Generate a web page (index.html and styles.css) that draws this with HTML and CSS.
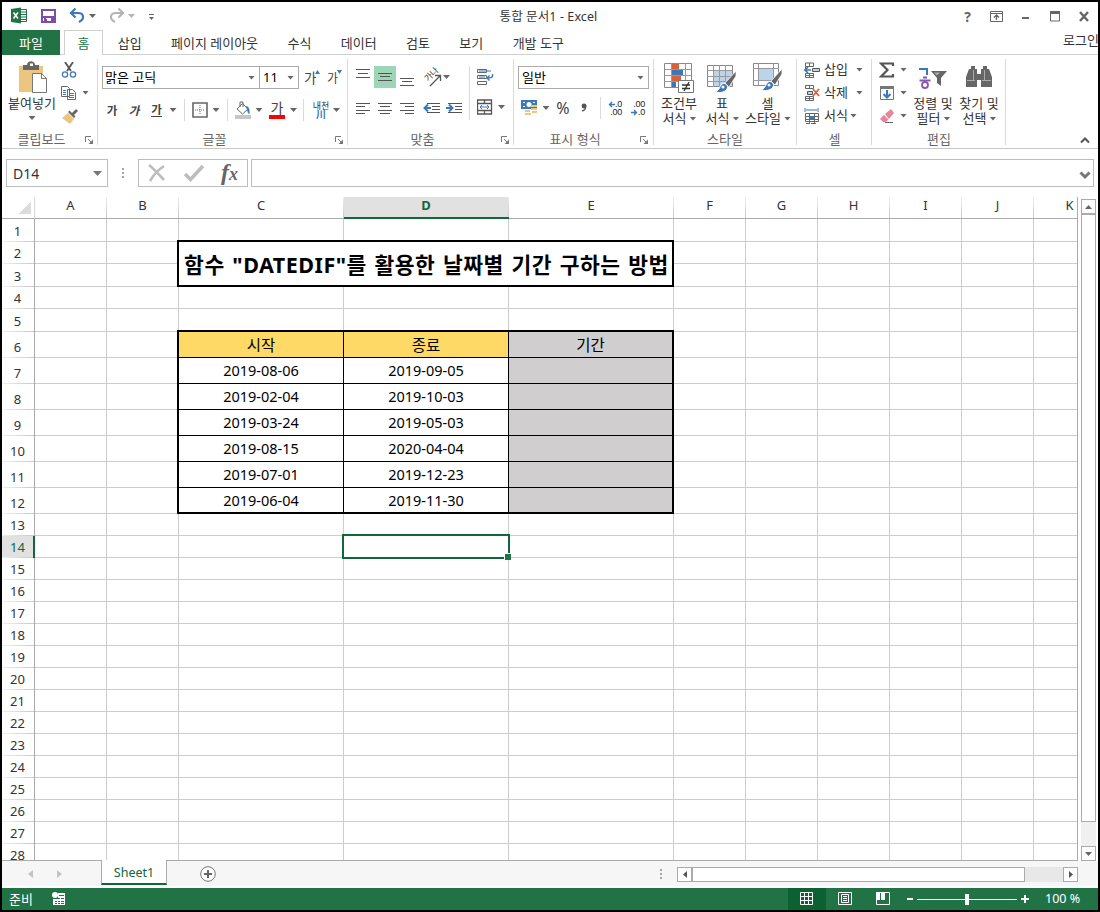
FILE: index.html
```html
<!DOCTYPE html>
<html lang="ko">
<head>
    <meta charset="UTF-8">
    <meta name="viewport" content="width=device-width, initial-scale=1.0">
    <title>통합 문서1 - Excel</title>
    <link rel="stylesheet" href="styles.css">
</head>
<body>
    <div class="window">
        <header class="titlebar">
            <div class="quick">
                <svg width="34" height="28"><path d="M18 7.500h6.500v12h-6.500" fill="#fff" stroke="#217346"/><path d="M19 10h5M19 12.500h5M19 15h5M19 17.500h5" stroke="#217346"/><path d="M9 7l10-1.500v16l-10-1.500z" fill="#217346"/><path d="M11.500 10.500l4.500 6M16 10.500l-4.500 6" stroke="#fff" stroke-width="1.600"/></svg>
                <svg width="28" height="28"><path d="M6 8h13v12h-13z" fill="#fff" stroke="#7e4ba6" stroke-width="2"/><path d="M6 14h13v2h-13zM8 16h2v4h-2zM15 16h3v4h-3z" fill="#7e4ba6"/><path d="M9 17h2v3h-2z" fill="#7e4ba6"/></svg>
                <svg width="26" height="28"><path d="M5 11h8c6 0 7 6 1 9" fill="none" stroke="#3b78b8" stroke-width="2.200"/><path d="M10.500 6.500L6 11l4.500 4.500" fill="none" stroke="#3b78b8" stroke-width="2.200"/></svg>
                <i class="arrow"></i>
                <svg class="redo" width="26" height="28"><path d="M21 11h-8c-6 0-7 6-1 9" fill="none" stroke="#b4b4b4" stroke-width="2.200"/><path d="M15.500 6.500L20 11l-4.500 4.500" fill="none" stroke="#b4b4b4" stroke-width="2.200"/></svg>
                <i class="arrow pale"></i>
                <svg width="30" height="28"><path d="M15 12.500h5" stroke="#666"/><path d="M15 15h5l-2.500 3z" fill="#666"/></svg>
            </div>
            <h1>통합 문서1 - Excel</h1>
            <div class="controls">
                <b>?</b>
                <svg width="29" height="28"><path d="M8.500 9.500h12v10h-12zM8.500 11.500h12" fill="none" stroke="#666"/><path d="M14.500 18v-5M12 15.500l2.500-2.500 2.500 2.500" fill="none" stroke="#666" stroke-width="1.300"/></svg>
                <svg width="29" height="28"><path d="M11 15h7v2h-7z" fill="#666"/></svg>
                <svg width="29" height="28"><path d="M10.500 11v8h9v-8M10 10.500h10" fill="none" stroke="#666"/><path d="M10 9h10v3h-10z" fill="#666"/></svg>
                <svg width="29" height="28"><path d="M11 10l8 9M19 10l-8 9" stroke="#666" stroke-width="2.400"/></svg>
            </div>
        </header>

        <nav class="tabs">
            <span class="file">파일</span>
            <span class="active">홈</span>
            <span>삽입</span>
            <span>페이지 레이아웃</span>
            <span>수식</span>
            <span>데이터</span>
            <span>검토</span>
            <span>보기</span>
            <span>개발 도구</span>
            <span class="login">로그인</span>
        </nav>

        <div class="ribbon">
            <section class="group clipboard">
                <div class="body">
                    <div class="big">
                        <svg width="30" height="34"><path d="M1 5h24v26h-24z" fill="#ecc57f"/><path d="M5 4h4c0-5 8-5 8 0h4v5h-16z" fill="#666"/><path d="M12 2.500h3v2.500h-3z" fill="#fff"/><path d="M14.500 12.500h9l5 5v14h-14z" fill="#fff" stroke="#777"/><path d="M23.500 12.500v5h5" fill="none" stroke="#777"/></svg>
                        <span>붙여넣기</span>
                        <i class="arrow"></i>
                    </div>
                    <div class="stack">
                        <div><svg width="16" height="16"><path d="M4 0l6 9M12 0l-6 9" stroke="#555" stroke-width="1.800"/><circle cx="4" cy="12.500" r="2.600" fill="none" stroke="#3b78b8" stroke-width="1.300"/><circle cx="12" cy="12.500" r="2.600" fill="none" stroke="#3b78b8" stroke-width="1.300"/></svg></div>
                        <div><svg width="16" height="16"><path d="M.5 1.500h6l2 2v8h-8zM6.500 4.500h5l3 3v7h-8z" fill="#fff" stroke="#666"/><path d="M2 5.500h3M2 7.500h3M2 9.500h3M8 8.500h5M8 10.500h5M8 12.500h5" stroke="#3b78b8"/></svg><i class="arrow"></i></div>
                        <div><svg width="17" height="16"><path d="M7 5l6 6-4 5-8-6z" fill="#ecc57f"/><path d="M7 4l6 6 1.500-1.500-6-6zM11 5l4-4 2 2-4 4z" fill="#666"/></svg></div>
                    </div>
                </div>
                <footer><span>클립보드</span><svg class="launch" width="9" height="9"><path d="M.5 6v-5.500h5.500M3 3l4 4" fill="none" stroke="#777"/><path d="M8 3.500v4.500h-4.500z" fill="#777"/></svg></footer>
            </section>

            <section class="group font">
                <div class="body">
                    <div class="line">
                        <div class="combo name">맑은 고딕<i class="arrow"></i></div>
                        <div class="combo size">11<i class="arrow"></i></div>
                        <div class="grow">가<svg width="5" height="4"><path d="M0 4l2.500-4 2.500 4z" fill="#3b78b8"/></svg></div>
                        <div class="grow shrink">가<svg width="5" height="4"><path d="M0 0h5l-2.500 4z" fill="#3b78b8"/></svg></div>
                    </div>
                    <div class="tools font-tools">
                        <b>가</b>
                        <b class="italic">가</b>
                        <b class="under">가</b>
                        <i class="arrow"></i>
                        <i class="sep"></i>
                        <svg width="16" height="16"><path d="M1 1h14v14h-14z" fill="#fff" stroke="#666" stroke-width="1.600"/><path d="M8 3v10M3 8h10" stroke="#666" stroke-dasharray="1 1"/></svg>
                        <i class="arrow"></i>
                        <i class="sep"></i>
                        <svg width="16" height="18"><path d="M2 8l5.500-5.500 5.500 5.500-5.500 5z" fill="#fff" stroke="#666"/><path d="M5 6v-5h3v5" fill="none" stroke="#666"/><path d="M10 5c4 0 5 3 4.500 8-3-1-1-4-4.500-8z" fill="#3b78b8"/><path d="M0 14h16v4h-16z" fill="#c6c6c6"/></svg>
                        <i class="arrow"></i>
                        <div class="red">가</div>
                        <i class="arrow"></i>
                        <i class="sep"></i>
                        <div class="ruby">내천<b>川</b></div>
                        <i class="arrow"></i>
                    </div>
                </div>
                <footer><span>글꼴</span><svg class="launch" width="9" height="9"><path d="M.5 6v-5.500h5.500M3 3l4 4" fill="none" stroke="#777"/><path d="M8 3.500v4.500h-4.500z" fill="#777"/></svg></footer>
            </section>

            <section class="group align">
                <div class="body split">
                    <div class="left">
                        <div class="tools">
                            <svg width="22" height="22"><path d="M4 3.500h14M6 7.500h10M4 11.500h14" stroke="#555"/></svg>
                            <svg class="on" width="22" height="22"><path d="M4 7.500h14M6 10.500h10M4 14.500h14" stroke="#555"/></svg>
                            <svg width="22" height="22"><path d="M4 12.500h14M6 15.500h10M4 19.500h14" stroke="#555"/></svg>
                            <svg class="orient" width="26" height="22"><text transform="translate(10 16) rotate(-45)" font-size="8.500" fill="#333">가나</text><path d="M12 20l10-10M17 9.500h5.500v5.500" fill="none" stroke="#555" stroke-width="1.300"/></svg>
                            <i class="arrow"></i>
                        </div>
                        <div class="tools">
                            <svg width="22" height="22"><path d="M4 6.500h14M4 9.500h9M4 13.500h14M4 16.500h9" stroke="#555"/></svg>
                            <svg width="22" height="22"><path d="M4 6.500h14M6 9.500h10M4 13.500h14M6 16.500h10" stroke="#555"/></svg>
                            <svg width="22" height="22"><path d="M4 6.500h14M9 9.500h9M4 13.500h14M9 16.500h9" stroke="#555"/></svg>
                            <svg width="25" height="22"><path d="M9 6.500h13M14 9.500h8M14 12.500h8M9 15.500h13" stroke="#555"/><path d="M13 11h-6M10 7.500L6.500 11l3.500 3.500" fill="none" stroke="#3b78b8" stroke-width="2"/></svg>
                            <svg width="22" height="22"><path d="M5 6.500h14M12 9.500h7M12 12.500h7M5 15.500h14" stroke="#555"/><path d="M3 11h6M6 7.500l3.500 3.500-3.500 3.500" fill="none" stroke="#3b78b8" stroke-width="2"/></svg>
                        </div>
                    </div>
                    <div class="right">
                        <svg width="17" height="18"><path d="M.5 1.500h9v3h-9zM.5 7.500h9v3h-9zM.5 13.500h9v3h-9z" fill="#fff" stroke="#666"/><path d="M2 3h12M2 9h6" stroke="#3b78b8"/><path d="M15.500 6v2q0 2-5 2M12.500 7.500l-2.500 2.500 2.500 2.500" fill="none" stroke="#3b78b8" stroke-width="1.400"/></svg>
                        <div><svg width="16" height="16"><path d="M.5 1h14v14h-14zM.5 4.500h14M.5 11.500h14M7.500 1v3.500M7.500 11.500v3.500" fill="none" stroke="#555" stroke-width="1.300"/><path d="M3 8h9M5 6L3 8l2 2M10 6l2 2-2 2" fill="none" stroke="#3b78b8"/></svg><i class="arrow"></i></div>
                    </div>
                </div>
                <footer><span>맞춤</span><svg class="launch" width="9" height="9"><path d="M.5 6v-5.500h5.500M3 3l4 4" fill="none" stroke="#777"/><path d="M8 3.500v4.500h-4.500z" fill="#777"/></svg></footer>
            </section>

            <section class="group number">
                <div class="body">
                    <div class="combo format">일반<i class="arrow"></i></div>
                    <div class="tools number-tools">
                        <svg width="17" height="18"><path d="M0 1h16v9h-16z" fill="#3b78b8"/><path d="M2 3h2v1h-2zM12 3h2v1h-2zM2 7h2v1h-2z" fill="#fff"/><circle cx="8" cy="5.500" r="2.500" fill="#fff"/><path d="M8 6h8v4h-8v3h-5v4h14v-10z" fill="#fff"/><path d="M10 6h6v2h-6zM10 9h6v2h-6zM11 12h5v2h-5zM4 11h5v2h-5zM4 14h6v2h-6z" fill="#ecc57f"/></svg>
                        <i class="arrow"></i>
                        <span class="percent">%</span>
                        <svg width="10" height="16"><circle cx="5" cy="6" r="2.400" fill="#555"/><path d="M6.500 5q1 5-3.500 6" fill="none" stroke="#555" stroke-width="1.500"/></svg>
                        <i class="sep"></i>
                        <div class="dec"><span><svg width="7" height="7"><path d="M7 3.500h-5M4 1L1.500 3.500l2.500 2.500" fill="none" stroke="#3b78b8" stroke-width="1.400"/></svg>.0</span><span>.00</span></div>
                        <div class="dec"><span>.00</span><span><svg width="7" height="7"><path d="M0 3.500h5M3 1l2.500 2.500-2.500 2.500" fill="none" stroke="#3b78b8" stroke-width="1.400"/></svg>.0</span></div>
                    </div>
                </div>
                <footer><span>표시 형식</span><svg class="launch" width="9" height="9"><path d="M.5 6v-5.500h5.500M3 3l4 4" fill="none" stroke="#777"/><path d="M8 3.500v4.500h-4.500z" fill="#777"/></svg></footer>
            </section>

            <section class="group styles">
                <div class="body">
                    <div class="big">
                        <svg width="30" height="34"><path d="M.5 2.500h27v24h-27z" fill="#fff" stroke="#888"/><path d="M7.500 2v25M14.500 2v25M21.500 2v25M0 8.500h28M0 14.500h28M0 20.500h28" stroke="#999"/><path d="M8 3h7v5h-7zM8 15h9v5h-9z" fill="#d9603b"/><path d="M8 9h11v5h-11zM8 21h4v5h-4z" fill="#3b78b8"/><path d="M14.500 19.500h15v12h-15z" fill="#fff" stroke="#777"/><path d="M18 24h8M18 27.500h8M25 21l-5 9" stroke="#333" stroke-width="1.300"/></svg>
                        <span>조건부</span><span>서식<i class="arrow"></i></span>
                    </div>
                    <div class="big">
                        <svg width="30" height="34"><path d="M.5 4.500h25v21h-25z" fill="#fff" stroke="#888"/><path d="M7 10h18v15h-18z" fill="#bdd3ea"/><path d="M6.500 4v22M12.500 4v22M18.500 4v22M0 9.500h25M0 15.500h25M0 20.500h25" stroke="#999"/><path d="M29 10L18 22l4 4 7-11z" fill="#666" stroke="#fff" stroke-width=".8"/><path d="M7 31c5 0 5-5 8-8 3-2 7 2 5 5-3 4-8 4-13 3z" fill="#3b78b8" stroke="#fff"/><circle cx="16" cy="26" r="1.500" fill="#fff"/></svg>
                        <span>표</span><span>서식<i class="arrow"></i></span>
                    </div>
                    <div class="big">
                        <svg width="30" height="34"><path d="M.5 2.500h25v22h-25z" fill="#fff" stroke="#888"/><path d="M5.500 2v23M20.500 2v23M0 7.500h26M0 19.500h26" stroke="#999"/><path d="M6 8h14v11h-14z" fill="#bdd3ea"/><path d="M29 8L18 20l4 4 7-11z" fill="#666" stroke="#fff" stroke-width=".8"/><path d="M7 29c5 0 5-5 8-8 3-2 7 2 5 5-3 4-8 4-13 3z" fill="#3b78b8" stroke="#fff"/><circle cx="16" cy="24" r="1.500" fill="#fff"/></svg>
                        <span>셀</span><span>스타일<i class="arrow"></i></span>
                    </div>
                </div>
                <footer><span>스타일</span></footer>
            </section>

            <section class="group cells">
                <div class="body">
                    <div class="item"><svg width="16" height="16"><path d="M1.500 1v3.500h8v-3.500h-8M5.500 1v3.500M1.500 11.500h8v4h-8zM5.500 11v5M1.500 13.500h8M1.500 5v2" fill="none" stroke="#666"/><path d="M8.500 6.500h7v3h-7z" fill="#bdd3ea" stroke="#555"/><path d="M7 8h-6M4 5L1 8l3 3" fill="none" stroke="#3b78b8" stroke-width="1.600"/></svg><span>삽입</span><i class="arrow"></i></div>
                    <div class="item"><svg width="16" height="16"><path d="M1.500.5h8v3h-8zM5.500.5v3M1.500 11.500h8v4h-8zM5.500 11v5M1.500 13.500h8" fill="none" stroke="#666"/><path d="M3.500 6.500h5v3h-5z" fill="#bdd3ea" stroke="#555"/><path d="M9 4l6 7M15 4l-6 7" stroke="#d9603b" stroke-width="1.800"/></svg><span>삭제</span><i class="arrow"></i></div>
                    <div class="item last"><svg width="16" height="16"><path d="M1 0v4M14 0v4M2 2h11" stroke="#3b78b8"/><path d="M1.500 5.500h13v8h-13zM1.500 8.500h13M1.500 11.500h13M5.500 5v10M10.500 5v10M2 15.500h4M7 15.500h5" fill="none" stroke="#666"/><path d="M6 8h4v4h-4z" fill="#3b78b8"/></svg><span>서식</span><i class="arrow"></i></div>
                </div>
                <footer><span>셀</span></footer>
            </section>

            <section class="group edit">
                <div class="body">
                    <div class="stack">
                        <div><svg width="16" height="16"><path d="M14 4v-2.500h-12l6.500 6.500-6.500 6.500h12v-2.500" fill="none" stroke="#555" stroke-width="2.200"/></svg><i class="arrow"></i></div>
                        <div><svg width="16" height="16"><path d="M1.500 1.500h13v13h-13z" fill="#fff" stroke="#777"/><path d="M1 1h14v3h-14z" fill="#777"/><path d="M8 5v7M4.500 9l3.500 3.500 3.500-3.500" fill="none" stroke="#3b78b8" stroke-width="2"/></svg><i class="arrow"></i></div>
                        <div><svg width="16" height="16"><path d="M6 6l6-5 3 4-5 6z" fill="#e8849b"/><path d="M5 7l4.500 4.500-2.500 2.500h-3l-3-3z" fill="#e8849b"/><path d="M6 14.500h8" stroke="#666"/></svg><i class="arrow"></i></div>
                    </div>
                    <div class="big">
                        <svg width="30" height="34"><path d="M1 8h8v6" fill="none" stroke="#3b78b8" stroke-width="2"/><path d="M5 16.500h4M1.500 19.500h11" stroke="#8b56b0" stroke-width="1.800"/><circle cx="7" cy="24" r="3" fill="none" stroke="#8b56b0" stroke-width="1.800"/><path d="M13 10h16l-6 7v8l-4-3v-5z" fill="#666"/><path d="M16 11.500h6l-3 3z" fill="#aaa"/></svg>
                        <span>정렬 및</span><span>필터<i class="arrow"></i></span>
                    </div>
                    <div class="big">
                        <svg width="30" height="34"><path d="M7 5h4v3h2v18h-11v-10l3-8h2zM19 5h4v3h2l3 8v10h-11v-18h2z" fill="#666"/><path d="M12 13h6v6h-6z" fill="#666"/><path d="M9.500 9v10M20.500 9v10M3 19.500h8M18 19.500h9" stroke="#aaa"/></svg>
                        <span>찾기 및</span><span>선택<i class="arrow"></i></span>
                    </div>
                </div>
                <footer><span>편집</span></footer>
            </section>
            <svg class="collapse" width="10" height="8"><path d="M1 6.500l4-4 4 4" fill="none" stroke="#555" stroke-width="2"/></svg>
        </div>

        <div class="formula">
            <div class="namebox">D14<svg width="9" height="5"><path d="M0 0h9l-4.500 5z" fill="#777"/></svg></div>
            <i class="dots"></i>
            <div class="buttons">
                <svg width="18" height="18"><path d="M1 1q4 3 15 15M16 2Q7 8 2 17" fill="none" stroke="#bdbdbd" stroke-width="2.600"/></svg>
                <svg width="20" height="18"><path d="M1 10l5.500 5.500L19 2" fill="none" stroke="#bdbdbd" stroke-width="3.600"/></svg>
                <span class="fx">f<small>x</small></span>
            </div>
            <div class="input"><svg width="12" height="10"><path d="M1.500 2.500l4.500 4.500 4.500-4.500" fill="none" stroke="#777" stroke-width="3"/></svg></div>
        </div>

        <main class="workspace">
            <div class="sheet" id="sheet">
                <div class="title-cell">함수 "DATEDIF"를 활용한 날짜별 기간 구하는 방법</div>
                <div class="data">
                    <div class="head">시작</div><div class="head">종료</div><div class="empty">기간</div>
                    <div>2019-08-06</div><div>2019-09-05</div><div class="empty"></div>
                    <div>2019-02-04</div><div>2019-10-03</div><div class="empty"></div>
                    <div>2019-03-24</div><div>2019-05-03</div><div class="empty"></div>
                    <div>2019-08-15</div><div>2020-04-04</div><div class="empty"></div>
                    <div>2019-07-01</div><div>2019-12-23</div><div class="empty"></div>
                    <div>2019-06-04</div><div>2019-11-30</div><div class="empty"></div>
                </div>
                <div class="selection"></div>
            </div>
            <div class="vscroll">
                <div class="btn"><svg width="7" height="4"><path d="M0 4h7l-3.500-4z" fill="#666"/></svg></div>
                <div class="thumb"></div>
                <div class="track"></div>
                <div class="btn"><svg width="7" height="4"><path d="M0 0h7l-3.500 4z" fill="#666"/></svg></div>
            </div>
        </main>

        <div class="sheetbar">
            <div class="arrows">
                <svg width="5" height="8"><path d="M5 0v8l-5-4z" fill="#c3c3c3"/></svg>
                <svg width="5" height="8"><path d="M0 0v8l5-4z" fill="#c3c3c3"/></svg>
            </div>
            <div class="sheet-tab">Sheet1</div>
            <svg class="add" width="16" height="16"><circle cx="8" cy="8" r="7.300" fill="#fff" stroke="#777"/><path d="M8 4v8M4 8h8" stroke="#666" stroke-width="2"/></svg>
            <i class="dots"></i>
            <div class="hscroll">
                <div class="btn"><svg width="4" height="7"><path d="M4 0v7l-4-3.500z" fill="#555"/></svg></div>
                <div class="thumb"></div>
                <div class="track"></div>
                <div class="btn"><svg width="4" height="7"><path d="M0 0v7l4-3.500z" fill="#555"/></svg></div>
            </div>
        </div>

        <footer class="status">
            <span class="ready">준비</span>
            <svg width="14" height="14"><path d="M6 1h7v12h-12v-6h5z" fill="#fff"/><circle cx="3" cy="3" r="3" fill="#fff"/><path d="M7 3.500h5M3 6.500h2M6 6.500h2M9 6.500h3M3 9.500h2M6 9.500h2M9 9.500h3M3 11.500h2M6 11.500h2M9 11.500h3" stroke="#217346"/></svg>
            <div class="views">
                <div class="on"><svg width="14" height="14"><path d="M.5.500h12v12h-12zM4.500 0v13M8.500 0v13M0 4.500h13M0 8.500h13" fill="none" stroke="#fff"/></svg></div>
                <div><svg width="14" height="14"><path d="M.5.500h13v12h-13zM3.500 2.500h7v8h-7zM5 4.500h4M5 6.500h4M5 8.500h4" fill="none" stroke="#fff"/></svg></div>
                <div><svg width="14" height="14"><path d="M.5.500h13v12h-13z" fill="none" stroke="#fff"/><path d="M0 0h4v8h-4zM5 0h4v8h-4z" fill="#fff"/></svg></div>
            </div>
            <svg class="zoom" width="122" height="14"><path d="M1 6h6v2h-6zM115 6h8v2h-8zM118 3h2v8h-2zM59 2h4v11h-4z" fill="#fff"/><path d="M11 7.500h100" stroke="#fff"/></svg>
            <span class="percent">100 %</span>
        </footer>
    </div>

    <script>
        const columns = ['A', 'B', 'C', 'D', 'E', 'F', 'G', 'H', 'I', 'J', 'K'];
        const rowCount = 28;
        const activeColumn = 'D';
        const activeRow = 14;
        const sheet = document.getElementById('sheet');

        function addCell(row, column, className, text) {
            const cell = document.createElement('div');
            cell.className = className;
            cell.textContent = text || '';
            cell.style.gridArea = row + ' / ' + column;
            sheet.prepend(cell);
        }

        // row and column 1 of the grid hold the headings
        addCell(1, 1, 'corner');
        columns.forEach((name, i) => {
            addCell(1, i + 2, name === activeColumn ? 'col-head active' : 'col-head', name);
        });

        for (let row = 1; row <= rowCount; row++) {
            addCell(row + 1, 1, row === activeRow ? 'row-head active' : 'row-head', String(row));
            columns.forEach((name, i) => addCell(row + 1, i + 2, 'cell'));
        }
    </script>
</body>
</html>
```

FILE: styles.css
```css
* {
    box-sizing: border-box;
}

body {
    margin: 0;
    font-family: "Noto Sans", "Noto Sans CJK KR", sans-serif;
    font-size: 12px;
    color: #333;
    overflow: hidden;
}

svg {
    display: block;
    flex: none;
}

.window {
    width: 1100px;
    height: 912px;
    border: 2px solid #000;
    background-color: #fff;
    display: flex;
    flex-direction: column;
    overflow: hidden;
    white-space: nowrap;
}

.arrow {
    width: 7px;
    height: 4px;
    margin: 0 -1px;
    flex: none;
    background-color: #666;
    clip-path: polygon(0 0, 100% 0, 50% 100%);
}

.arrow.pale {
    background-color: #b4b4b4;
}

.sep {
    width: 1px;
    height: 22px;
    background-color: #dadada;
}

/* title bar */
.titlebar {
    height: 28px;
    display: grid;
    grid-template-columns: 1fr auto 1fr;
    align-items: center;
}

.quick {
    display: flex;
    align-items: center;
}

.quick svg:nth-child(3) {
    margin-left: 1px;
    margin-right: -1px;
}

.quick .redo {
    margin-left: 8px;
}

.titlebar h1 {
    margin: 0 3px 1px 0;
    font-size: 12.5px;
    font-weight: normal;
    letter-spacing: 0.1px;
}

.controls {
    display: flex;
    justify-content: flex-end;
    align-items: center;
}

.controls b {
    width: 29px;
    text-align: center;
    font-size: 14px;
    color: #666;
}

/* ribbon tabs */
.tabs {
    height: 25px;
    display: flex;
    border-bottom: 1px solid #d0d0d0;
    font-size: 13px;
    line-height: 26px;
}

.tabs span {
    padding: 0 14.7px;
}

.tabs .file {
    width: 58px;
    height: 25px;
    padding: 0;
    text-align: center;
    color: #fff;
    background-color: #217346;
}

.tabs .active {
    width: 39px;
    height: 25px;
    margin-left: 4px;
    padding: 0;
    text-align: center;
    color: #217346;
    background-color: #fff;
    border: 1px solid #d0d0d0;
    border-bottom: none;
    line-height: 25px;
}

.tabs .login {
    margin-left: auto;
    margin-right: -1px;
    padding: 0;
    line-height: 20px;
}

/* ribbon */
.ribbon {
    height: 94px;
    display: flex;
    border-bottom: 1px solid #c8c8c8;
}

.group {
    display: flex;
    flex-direction: column;
    background: linear-gradient(#dadada, #dadada) right 4px / 1px 86px no-repeat;
}

.group .body {
    height: 76px;
    display: flex;
}

.group footer {
    display: flex;
    align-items: center;
    height: 17px;
    font-size: 13px;
    line-height: 17px;
    color: #666;
}

.group footer span {
    flex: 1;
    text-align: center;
}

.group .launch {
    margin: 2px 4px 0;
}

.big {
    display: flex;
    flex-direction: column;
    align-items: center;
    padding-top: 6px;
    font-size: 13px;
    line-height: 15px;
}

.big svg {
    margin-bottom: 1px;
}

.big span {
    display: flex;
    align-items: center;
}

.big span .arrow {
    margin-left: 3px;
}

.stack {
    padding-top: 3px;
}

.stack div {
    height: 23px;
    display: flex;
    align-items: center;
}

.stack .arrow {
    margin-left: 5px;
}

.clipboard {
    width: 96px;
}

.clipboard .big {
    width: 59px;
    padding-left: 1px;
}

.clipboard .big svg {
    margin-left: 2px;
}

.clipboard .big .arrow {
    margin-top: 5px;
}

.combo {
    height: 23px;
    flex: none;
    border: 1px solid #ababab;
    display: flex;
    justify-content: space-between;
    align-items: center;
    padding: 0 5px 0 3px;
    font-size: 13px;
    line-height: 21px;
    color: #000;
}

.font {
    width: 250px;
}

.font .body,
.number .body {
    flex-direction: column;
    padding: 11px 0 0 4px;
}

.font .line {
    display: flex;
}

.combo.name {
    width: 158px;
    padding-left: 2px;
}

.combo.size {
    width: 40px;
    margin-left: -1px;
}

.grow {
    display: flex;
    flex: none;
    width: 23px;
    margin-left: 5px;
    font-size: 13.5px;
    line-height: 25px;
    color: #444;
}

.grow.shrink {
    margin-left: 0;
    font-size: 12px;
}

.grow svg {
    margin-top: 4px;
    margin-left: -1px;
}

.tools {
    display: flex;
    align-items: center;
    height: 22px;
}

.font-tools {
    display: grid;
    grid-template-columns: 22px 22px 23px 10px 12px 20px 12px 10px 22px 10px 26px 7px 13px 22px 9px;
    justify-items: center;
    margin: 8px 0 0 -1px;
}

.font-tools b {
    font-size: 11.5px;
    line-height: 13px;
    color: #444;
}

.font-tools .italic {
    font-style: italic;
}

.font-tools .under {
    border-bottom: 1px solid #444;
}

.red {
    width: 16px;
    font-size: 14px;
    line-height: 14px;
    text-align: center;
    color: #444;
    border-bottom: 4px solid #f00;
}

.ruby {
    display: flex;
    flex-direction: column;
    align-items: center;
    font-size: 9px;
    line-height: 9px;
}

.font-tools .ruby b {
    font-size: 10px;
    line-height: 9px;
    color: #3b78b8;
}

.align {
    width: 166px;
}

.align .split {
    padding: 11px 0 0 4px;
}

.align .left {
    width: 118px;
    height: 54px;
    border-right: 1px solid #dadada;
}

.align .left .tools + .tools {
    margin-top: 9px;
}

.align .left .on {
    background-color: #9fd5b7;
}

.orient {
    overflow: visible;
}

.align .right {
    padding: 2px 0 0 7px;
}

.align .right div {
    display: flex;
    align-items: center;
    margin-top: 13px;
}

.align .right .arrow {
    margin-left: 5px;
}

.number {
    width: 140px;
}

.number footer {
    padding-right: 1px;
}

.combo.format {
    width: 131px;
}

.number-tools {
    display: grid;
    grid-template-columns: 22px 12px 22px 20px 13px 16px 30px;
    justify-items: center;
    margin-top: 8px;
}

.number-tools .percent {
    font-size: 16px;
    color: #444;
}

.dec {
    display: flex;
    flex-direction: column;
    align-items: flex-end;
    font-family: "Liberation Sans", sans-serif;
    font-size: 9px;
    line-height: 8px;
    letter-spacing: -0.3px;
    color: #222;
}

.dec span {
    display: flex;
    align-items: center;
}

.styles {
    width: 143px;
    padding-left: 3px;
}

.styles footer {
    padding-right: 4px;
}

.styles .big:nth-child(1) {
    width: 44px;
}

.styles .big:nth-child(2) {
    width: 42px;
}

.styles .big:nth-child(3) {
    width: 49px;
}

.cells {
    width: 75px;
}

.cells .body {
    flex-direction: column;
    padding: 3px 0 0 7px;
}

.cells .item {
    height: 23px;
    display: flex;
    align-items: center;
    font-size: 13px;
    line-height: 19px;
}

.cells .item span {
    margin: -1px 0 0 4px;
}

.cells .item .arrow {
    margin-left: 8px;
}

.cells .last .arrow {
    margin-left: 2px;
}

.edit {
    width: 134px;
}

.edit .stack {
    width: 38px;
    padding-left: 7px;
}

.edit .big {
    width: 46px;
}

.collapse {
    margin: 81px 0 0 74px;
}

/* formula bar */
.formula {
    height: 48px;
    padding: 10px 4px 0;
    display: flex;
}

.namebox,
.buttons,
.input {
    height: 28px;
    border: 1px solid #bdbdbd;
    display: flex;
    align-items: center;
}

.namebox {
    width: 102px;
    padding: 0 5px 0 6px;
    justify-content: space-between;
    font-size: 14px;
}

.dots {
    width: 2px;
    height: 10px;
    background: repeating-linear-gradient(#a5a5a5 0 2px, transparent 2px 4px);
}

.formula .dots {
    margin: 9px 14px 0;
}

.buttons {
    width: 110px;
    padding-left: 9px;
}

.buttons svg + svg {
    margin-left: 18px;
}

.fx {
    margin-left: 17px;
    font-family: "Liberation Serif", serif;
    font-size: 24px;
    font-style: italic;
    font-weight: bold;
    line-height: 24px;
    color: #666;
}

.fx small {
    font-size: 18px;
}

.input {
    width: 843px;
    margin-left: 3px;
    justify-content: flex-end;
    padding: 3px 2px 0 0;
}

/* worksheet */
.workspace {
    height: 664px;
    display: flex;
}

.sheet {
    width: 1076px;
    height: 664px;
    overflow: hidden;
    display: grid;
    grid-template-columns: 33px 72px 72px repeat(3, 165px) repeat(6, 72px);
    grid-template-rows: 22px 23px 22px 23px 22px 23px repeat(7, 26px) repeat(16, 22px);
    font-size: 13px;
    border-right: 1px solid #ababab;
    border-bottom: 1px solid #ababab;
}

.cell {
    border-right: 1px solid #cdcdcd;
    border-bottom: 1px solid #cdcdcd;
}

.col-head {
    display: flex;
    justify-content: center;
    align-items: center;
    padding: 0 1px 4px 0;
    line-height: 17px;
    border-bottom: 1px solid #ababab;
    background: linear-gradient(#f0f0f0, #c8c8c8) right / 1px 100% no-repeat;
}

.col-head.active {
    color: #0e6839;
    font-weight: bold;
    padding-bottom: 3px;
    background-color: #e1e1e1;
    border-bottom: 2px solid #0e6839;
}

.row-head {
    display: flex;
    justify-content: center;
    align-items: flex-end;
    padding: 0 1px 1px 0;
    line-height: 20px;
    border-right: 1px solid #ababab;
    background: linear-gradient(90deg, #f0f0f0, #c8c8c8) bottom / 100% 1px no-repeat;
}

.row-head.active {
    color: #0e6839;
    padding-right: 0;
    background-color: #e1e1e1;
    border-right: 2px solid #0e6839;
}

.corner {
    border-right: 1px solid #d8d8d8;
    border-bottom: 1px solid #ababab;
    background: linear-gradient(135deg, transparent 50%, #dcdcdc 50%) 16px 4px / 13px 13px no-repeat;
}

.title-cell {
    grid-area: 3 / 4 / 5 / 7;
    margin: -2px 0 0 -2px;
    padding: 0 0 1px 2px;
    display: flex;
    justify-content: center;
    align-items: center;
    background-color: #fff;
    border: 2px solid #000;
    color: #000;
    font-size: 21.5px;
    font-weight: bold;
    letter-spacing: 0.5px;
    word-spacing: 1.6px;
}

.data {
    grid-area: 7 / 4 / 14 / 7;
    margin: -2px 0 0 -2px;
    display: grid;
    grid-template-columns: 164px 164px 163px;
    grid-template-rows: repeat(6, 25px) 24px;
    gap: 1px;
    background-color: #000;
    border: 2px solid #000;
    color: #000;
    font-size: 14.5px;
    line-height: 25px;
    text-align: center;
}

.data div {
    background-color: #fff;
}

.data .head {
    background-color: #ffd966;
}

.data .head,
.data .empty {
    font-size: 15.5px;
    line-height: 26px;
}

.data .empty {
    background-color: #d0cece;
}

.selection {
    grid-area: 15 / 5;
    margin: -2px -1px -1px -2px;
    border: 2px solid #0e6839;
    position: relative;
}

.selection::after {
    content: "";
    position: absolute;
    right: -3px;
    bottom: -3px;
    width: 6px;
    height: 6px;
    background-color: #217346;
    border: 1px solid #fff;
    border-right: none;
    border-bottom: none;
}

.btn {
    width: 15px;
    height: 15px;
    flex: none;
    display: flex;
    justify-content: center;
    align-items: center;
    background-color: #fff;
    border: 1px solid #ababab;
}

.thumb {
    background-color: #fff;
    border: 1px solid #ababab;
}

.track {
    flex: 1;
    background-color: #e8e8e8;
}

.vscroll {
    width: 15px;
    height: 662px;
    margin: 2px 0 0 3px;
    display: flex;
    flex-direction: column;
}

.vscroll .thumb {
    height: 608px;
}

.vscroll .track {
    background-color: #f0f0f0;
}

/* sheet tabs */
.sheetbar {
    height: 27px;
    display: flex;
    background-color: #f6f6f6;
    border-bottom: 2px solid #fff;
}

.arrows {
    width: 99px;
    display: flex;
    align-items: center;
    gap: 24px;
    padding-left: 26px;
}

.sheet-tab {
    width: 66px;
    height: 25px;
    margin-top: -1px;
    background-color: #fff;
    border: 1px solid #ababab;
    border-top: none;
    border-bottom: 2px solid #0e6839;
    text-align: center;
    font-size: 12.5px;
    line-height: 25px;
    color: #0e6839;
}

.add {
    margin: 5px 0 0 33px;
}

.sheetbar .dots {
    margin: 8px 15px 0 auto;
}

.hscroll {
    width: 401px;
    margin: 6px 20px 0 0;
    height: 15px;
    display: flex;
}

.hscroll .thumb {
    width: 333px;
}

/* status bar */
.status {
    height: 22px;
    flex: none;
    display: flex;
    align-items: center;
    background-color: #217346;
    color: #fff;
    font-size: 13px;
    line-height: 22px;
}

.ready {
    width: 50px;
    padding-left: 7px;
}

.views {
    display: flex;
    margin-left: auto;
}

.views div {
    width: 38px;
    height: 22px;
    display: flex;
    justify-content: center;
    align-items: center;
}

.views .on {
    background-color: #0b6131;
}

.zoom {
    margin-left: 4px;
    overflow: visible;
}

.status .percent {
    width: 70px;
    padding-left: 17px;
    font-size: 12.5px;
}
```
